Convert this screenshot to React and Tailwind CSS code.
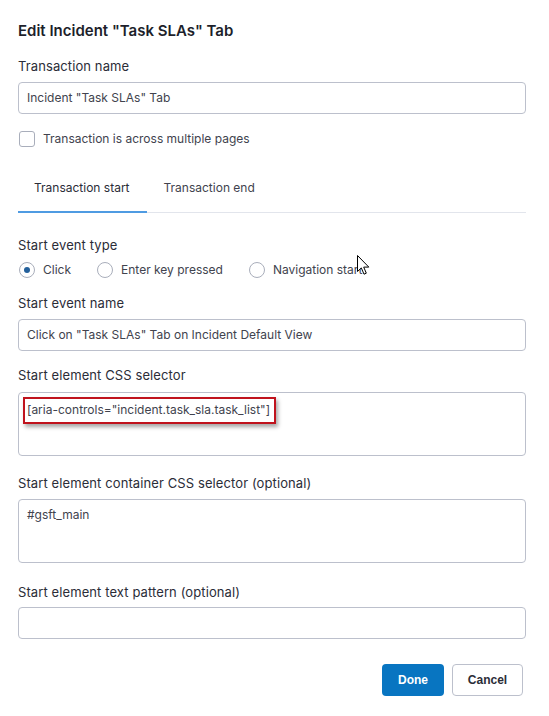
import React from "react";

const font = { fontFamily: "Inter, 'Noto Sans', sans-serif" };

function Label({ children, className = "" }) {
  return (
    <div className={"text-[13px] leading-[18px] tracking-[0.1px] text-[#2b2d38] " + className}>{children}</div>
  );
}

function Input({ value, className = "" }) {
  return (
    <div
      className={
        "h-[32px] rounded-[4px] border border-[#bcc0cc] bg-white px-[8px] flex items-center text-[12px] text-[#41434e] " +
        className
      }
    >
      {value}
    </div>
  );
}

function Radio({ checked, label, className = "" }) {
  return (
    <div className={"flex items-center h-[18px] " + className}>
      <span className="w-[16px] h-[16px] rounded-full border border-[#a9aebb] flex items-center justify-center bg-white">
        {checked && <span className="w-[6px] h-[6px] rounded-full bg-[#24609b]" />}
      </span>
      <span className="ml-[8px] text-[12px] text-[#41434e]">{label}</span>
    </div>
  );
}

export default function App() {
  return (
    <div className="w-[549px] h-[716px] bg-white relative" style={font}>
      <div className="ml-[18px] w-[508px] pt-[21px]">
        <div className="text-[15px] leading-[20px] font-semibold text-[#1d1f2b]">
          Edit Incident "Task SLAs" Tab
        </div>
        <Label className="mt-[16px]">Transaction name</Label>
        <Input value={'Incident "Task SLAs" Tab'} className="mt-[7px]" />

        <div className="mt-[16px] flex items-center h-[18px]">
          <span className="w-[16px] h-[16px] ml-[1px] rounded-[3px] border border-[#a9aebb] bg-white" />
          <span className="ml-[8px] text-[12px] text-[#41434e]">
            Transaction is across multiple pages
          </span>
        </div>

        <div className="mt-[17px] flex border-b border-[#e2e5ec]">
          <div className="pl-[16px] pr-[17px] pt-[14px] pb-[14px] leading-[18px] text-[12px] text-[#2b2d38] border-b-[2px] border-[#4f9be2] -mb-px">
            Transaction start
          </div>
          <div className="px-[17px] pt-[14px] pb-[14px] leading-[18px] text-[12px] text-[#41434e] border-b-[2px] border-transparent -mb-px">
            Transaction end
          </div>
        </div>

        <Label className="mt-[23px]">Start event type</Label>
        <div className="mt-[7px] flex items-center">
          <Radio checked label="Click" className="ml-[1px]" />
          <Radio label="Enter key pressed" className="ml-[26px]" />
          <Radio label="Navigation start" className="ml-[26px]" />
        </div>

        <Label className="mt-[15px]">Start event name</Label>
        <Input value={'Click on "Task SLAs" Tab on Incident Default View'} className="mt-[7px]" />

        <Label className="mt-[15px]">Start element CSS selector</Label>
        <div className="mt-[8px] h-[64px] rounded-[4px] border border-[#bcc0cc] bg-white pt-[3px] pl-[4px]">
          <div className="inline-block border-[2px] border-[#c0131d] pl-[2px] pr-[4px] h-[27px] leading-[22px] text-[12px] text-[#41434e] shadow-[2px_3px_4px_rgba(0,0,0,0.35)]">
            [aria-controls="incident.task_sla.task_list"]
          </div>
        </div>

        <Label className="mt-[18px]">Start element container CSS selector (optional)</Label>
        <div className="mt-[7px] h-[64px] rounded-[4px] border border-[#bcc0cc] bg-white pt-[6px] px-[8px] text-[12px] leading-[18px] text-[#41434e]">
          #gsft_main
        </div>

        <Label className="mt-[20px]">Start element text pattern (optional)</Label>
        <Input value="" className="mt-[6px]" />

        <div className="mt-[25px] flex justify-end pr-[3px] gap-[8px]">
          <button
            className="w-[62px] h-[32px] rounded-[4px] bg-[#0875c1] text-white text-[12px] font-bold"
            style={{ fontFamily: "'Liberation Sans', Arial, sans-serif" }}
          >
            Done
          </button>
          <button
            className="w-[71px] h-[32px] rounded-[4px] border border-[#bcc0cc] bg-white text-[#2b2d38] text-[12px] font-bold"
            style={{ fontFamily: "'Liberation Sans', Arial, sans-serif" }}
          >
            Cancel
          </button>
        </div>
      </div>

      <svg
        className="absolute left-[357px] top-[255px]"
        width="14"
        height="22"
        viewBox="0 0 14 22"
      >
        <path
          d="M0.5 0.5 L0.5 16.5 L4.3 12.9 L7 19.2 L9.3 18.2 L6.7 12.1 L11.8 12.1 Z"
          fill="white"
          stroke="black"
          strokeWidth="1"
          strokeLinejoin="miter"
        />
      </svg>
    </div>
  );
}
